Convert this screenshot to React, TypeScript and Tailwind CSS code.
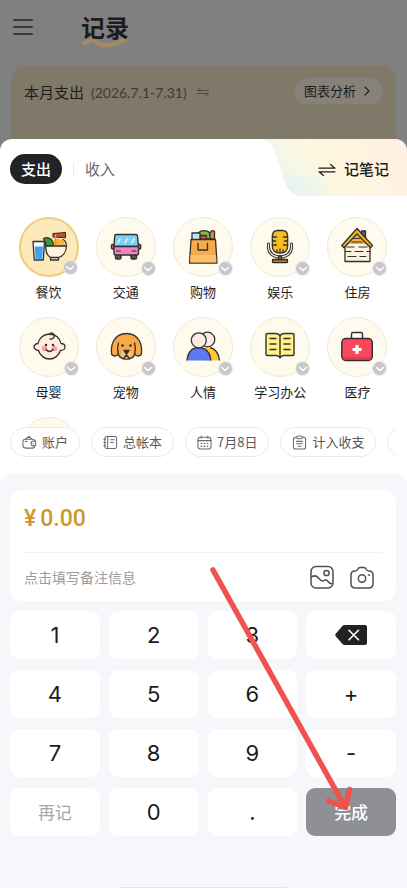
import type { ReactNode } from "react";

const INK = "#33302e";

function FoodIcon() {
  return (
    <g stroke={INK} strokeWidth="1.300" strokeLinejoin="round" strokeLinecap="round">
      <path d="M14 24.500h11.500l-1.200 18.500h-9z" fill="#f4fbff" />
      <path d="M15.800 29.500h8.200l-.8 12.500h-6.700z" fill="#3fa4e8" stroke="none" />
      <path d="M34 16.500l12.500-1v5.200L34 20z" fill="#b9532a" strokeWidth="1.100" />
      <path d="M33 29c0-4 2.500-7 6-7s7 2.500 7 7z" fill="#f8b53c" stroke="none" />
      <path d="M36.500 18v9" stroke="#f08a24" strokeWidth="1.500" />
      <path d="M24.500 21.500c4-2 8 0 9 3l1 4.500h-7.500c0-3-1-4.500-2.500-7.500z" fill="#3c9a3c" />
      <path d="M44 22.500c2.500 1.500 3.500 4 3.300 6.500" fill="none" />
      <path d="M26.700 29h20.600c.2 5.500-3 10-7.800 11.500V43h-8v-2.500c-3.500-2-4.800-6-4.800-11.500z" fill="#fff3dd" />
      <path d="M31.500 40.500h8" />
    </g>
  );
}

function BusIcon() {
  return (
    <g stroke={INK} strokeWidth="1.400" strokeLinejoin="round" strokeLinecap="round">
      <rect x="19.500" y="37" width="5.500" height="5" rx="1.200" fill="#5b5658" />
      <rect x="35" y="37" width="5.500" height="5" rx="1.200" fill="#5b5658" />
      <rect x="15.500" y="27.500" width="3" height="4.500" rx="1" fill="#e9559c" />
      <rect x="41.700" y="27.500" width="3" height="4.500" rx="1" fill="#e9559c" />
      <path d="M20 17.500h20q1.500 0 1.500 1.500l1 10.500H17.800l1-10.500q0-1.500 1.200-1.500z" fill="#7ed0f3" />
      <path d="M18 29.500h24.500v7q0 1.500-1.500 1.500H19.500q-1.500 0-1.500-1.500z" fill="#f285bd" />
      <path d="M22 26l2-4M29 26l2-4M36 26l2-4" stroke="#e8f9ff" />
      <path d="M20.500 34h4M36 34h4" strokeWidth="1.200" />
    </g>
  );
}

function BagIcon() {
  return (
    <g stroke={INK} strokeWidth="1.300" strokeLinejoin="round" strokeLinecap="round">
      <path d="M25 22v-6q5-4 11-1l2 7z" fill="#7cc142" />
      <rect x="19" y="16" width="8" height="7" fill="#bfe6f5" />
      <rect x="27.500" y="18.500" width="6" height="4" fill="#e5483b" />
      <path d="M37 22v-6q2-4 4.500-1.500V22z" fill="#d98a45" />
      <path d="M18 22.500h24.500l1.500 23.500H16.500z" fill="#f8ab4c" />
      <path d="M17.500 38h25.500l.4 7.400H17.200z" fill="#ffc06c" stroke="none" />
      <path d="M25 26.500v6.500h9.500v-6.500" fill="none" />
    </g>
  );
}

function MicIcon() {
  return (
    <g stroke={INK} strokeWidth="1.300" strokeLinejoin="round" strokeLinecap="round">
      <path d="M18.500 27v3c0 6 5 10 11.500 10s11.500-4 11.500-10v-3" fill="none" strokeWidth="3.200" />
      <path d="M18.500 27v3c0 6 5 10 11.500 10s11.500-4 11.500-10v-3" fill="none" stroke="#eee7dc" strokeWidth="1.200" />
      <path d="M28.500 39h3v4h-3z" fill="#b8722a" />
      <rect x="22.500" y="42.500" width="15" height="3.200" rx=".8" fill="#b8722a" />
      <path d="M22.300 20q0-6.500 5.200-6.500h5q5.200 0 5.200 6.500v9q0 7-7.700 7t-7.700-7z" fill="#f8bd24" />
      <path d="M22.500 20h4M22.500 24h3M22.500 28h4M37.500 20h-4M37.500 24h-3M37.500 28h-4M27 33v2M30 32v3.500M33 33v2" />
    </g>
  );
}

function HouseIcon() {
  return (
    <g stroke={INK} strokeWidth="1.300" strokeLinejoin="round" strokeLinecap="round">
      <path d="M34.500 14h4v9h-4z" fill="#5d6674" />
      <path d="M18 27l12-12 13 12v17.500H18z" fill="#fdf3df" />
      <path d="M22 27l8-9 9 9z" fill="#f7b62a" stroke="none" />
      <path d="M30 11.500L14.800 28.500l2.200 2.200L30 17l13.500 13.700 2-2.200z" fill="#f5b01f" />
      <path d="M25 25h10M20 30h7M32 30h8M18 34.500h6M28 34.500h8M40 34.500h3M21 39.500h8M33 39.500h6M27 21.500h6" strokeWidth="1.200" />
    </g>
  );
}

function BabyIcon() {
  return (
    <g stroke={INK} strokeWidth="1.300" strokeLinejoin="round" strokeLinecap="round">
      <path d="M30.500 17c-6 0-10.500 4-11.500 9.500-2.500 0-4 2-4 3.500s2 3.500 4.500 3.500c1.500 5 6 8.500 11 8.500s9.500-3.500 11-8.500c2.500 0 4.500-1.500 4.500-3.500s-1.500-3.500-4-3.500C41 21 36.500 17 30.500 17z" fill="#fdeee0" />
      <path d="M31 22c4 .5 5.500-3.500 3-5.500-1.500-1.200-3.500-.3-3 1.200" fill="none" />
      <circle cx="25.500" cy="31.500" r="2.800" fill="#ff9d9b" stroke="none" />
      <circle cx="35.500" cy="31.500" r="2.800" fill="#ff9d9b" stroke="none" />
      <circle cx="27" cy="28" r=".6" fill={INK} />
      <circle cx="34" cy="28" r=".6" fill={INK} />
      <path d="M27 32.500q3.500 4 7 0" fill="none" />
    </g>
  );
}

function DogIcon() {
  return (
    <g stroke={INK} strokeWidth="1.300" strokeLinejoin="round" strokeLinecap="round">
      <path d="M30.500 16.500c-6.500 0-10.500 3-13 7.500-2 4-2.500 9-1.800 13.500 2.500 2.500 5.500 1.500 6.500-.5 1 3.500 3.500 5 8.300 5s7.300-1.500 8.300-5c1 2 4 3 6.500.5.700-4.500.2-9.500-1.800-13.500-2.500-4.500-6.500-7.500-13-7.500z" fill="#f9a945" />
      <path d="M22.200 37c-1-4-.7-8 .3-11M38.800 37c1-4 .7-8-.3-11" fill="none" />
      <path d="M25 37c1-2.500 3-4 5.500-4s4.500 1.500 5.500 4c-1 3-2.500 4.500-5.500 4.500S26 40 25 37z" fill="#fbc57c" stroke="none" />
      <circle cx="26.500" cy="28.500" r=".7" fill={INK} />
      <circle cx="34.500" cy="28.500" r=".7" fill={INK} />
      <path d="M28 33.500h5l-1.500 2.500h-2z" fill={INK} />
      <path d="M30.500 36v2l-3 3.500M30.500 38l3 3.500" fill="none" />
    </g>
  );
}

function PeopleIcon() {
  return (
    <g stroke={INK} strokeWidth="1.300" strokeLinejoin="round">
      <path d="M30 43.500V31c9-2.500 15.500 3 16.500 12.500z" fill="#fbcb2e" stroke="none" />
      <path d="M37 30.500c5.500 1.500 9 6.500 9.500 13" fill="none" />
      <circle cx="34.500" cy="22.500" r="7.300" fill="#fdeae2" />
      <path d="M14 43.500c.5-8 5-13 11.800-13s11.500 5 12 13z" fill="#5d78f5" stroke="none" />
      <path d="M14 43.500c.5-8 5-13 11.800-13s11.500 5 12 13" fill="none" />
      <circle cx="25.800" cy="23.300" r="7.500" fill="#fdeae2" />
    </g>
  );
}

function BookIcon() {
  return (
    <g stroke={INK} strokeWidth="1.400" strokeLinejoin="round" strokeLinecap="round">
      <path d="M30 18.500q-2-2-4.500-2h-8q-1.500 0-1.500 1.500v19q0 1.500 1.500 1.500H26q2.500 0 4 2.500 1.500-2.500 4-2.500h8.500q1.500 0 1.500-1.500V18q0-1.500-1.500-1.500h-8q-2.500 0-4.500 2z" fill="#fff08a" />
      <path d="M30 18.500V40M20 21.500h6M20 27h6M20 32.500h6M34 21.500h6M34 27h6M34 32.500h6" fill="none" />
    </g>
  );
}

function KitIcon() {
  return (
    <g stroke={INK} strokeWidth="1.400" strokeLinejoin="round">
      <path d="M24.500 22v-5q0-1.500 1.500-1.500h8q1.500 0 1.500 1.500v5" fill="#fff" />
      <rect x="14.800" y="21.500" width="30.500" height="22" rx="4" fill="#f9475c" />
      <path d="M15.500 38.500v1.500q0 3 3 3h23q3 0 3-3v-1.500q0 2-3 2h-23q-3 0-3-2z" fill="#d93850" stroke="none" />
      <path d="M30 28v9M25.500 32.500h9" stroke="#fff" strokeWidth="3.200" />
    </g>
  );
}

const categories: { name: string; icon: ReactNode }[] = [
  { name: "餐饮", icon: <FoodIcon /> },
  { name: "交通", icon: <BusIcon /> },
  { name: "购物", icon: <BagIcon /> },
  { name: "娱乐", icon: <MicIcon /> },
  { name: "住房", icon: <HouseIcon /> },
  { name: "母婴", icon: <BabyIcon /> },
  { name: "宠物", icon: <DogIcon /> },
  { name: "人情", icon: <PeopleIcon /> },
  { name: "学习办公", icon: <BookIcon /> },
  { name: "医疗", icon: <KitIcon /> },
];

function CategoryButton({ name, icon, active }: { name: string; icon: ReactNode; active: boolean }) {
  return (
    <button type="button" className="flex flex-col items-center gap-[5px]">
      <span
        className={
          active
            ? "relative flex size-[60px] items-center justify-center rounded-full border-2 border-[#ecce7e] bg-[#fde8b9]"
            : "relative flex size-[60px] items-center justify-center rounded-full border border-[#f0ead0] bg-[#fefbee]"
        }
      >
        <svg viewBox="0 0 60 60" className="size-[60px] shrink-0" fill="none">
          {icon}
        </svg>
        <span className="absolute -right-px bottom-0 flex size-[15px] items-center justify-center rounded-full border border-white/60 bg-[#c9c7ca]">
          <svg viewBox="0 0 10 10" className="size-[10px]" fill="none" stroke="#fff" strokeWidth="1.500" strokeLinecap="round" strokeLinejoin="round">
            <path d="M1.500 3.500L5 6.500l3.500-3" />
          </svg>
        </span>
      </span>
      <span className="text-[13px] leading-5 whitespace-nowrap text-[#1c1c1e]">{name}</span>
    </button>
  );
}

const chips: { label: string; icon: ReactNode }[] = [
  {
    label: "账户",
    icon: (
      <>
        <path d="M3.500 4.500h8q2 0 2 2M13.500 11.500q0 2.500-2.500 2.500H4q-3 0-3-3V7q0-2.500 2.500-2.500L7.500 1.500l3 3M3.500 7h2" />
        <path d="M14.500 6.500h-2.300a2.500 2.500 0 0 0 0 5h2.300zM12 9h.3" />
      </>
    ),
  },
  {
    label: "总帐本",
    icon: (
      <>
        <rect x="2" y="1.500" width="12.500" height="13" rx="2" />
        <path d="M5 1.500v13M.8 4.500h2M.8 8h2M.8 11.500h2M8 5h4M8 8h3" />
      </>
    ),
  },
  {
    label: "7月8日",
    icon: (
      <>
        <rect x="1" y="2.500" width="14" height="12.500" rx="3" />
        <path d="M1 6h14M4.500 1v2.500M11.500 1v2.500" />
        <path d="M4.500 9h.5M7.700 9h.5M11 9h.5M4.500 12h.5M7.700 12h.5M11 12h.5" strokeWidth="1.400" />
      </>
    ),
  },
  {
    label: "计入收支",
    icon: (
      <>
        <path d="M5 2.500H4q-2.500 0-2.500 2.500v7.500Q1.500 15 4 15h8q2.500 0 2.500-2.500V5q0-2.500-2.500-2.500h-1" />
        <rect x="5" y="1" width="6" height="3" rx="1.500" />
        <path d="M4.800 6.800h6.400M4.800 9.300h6.400M6.500 12h3" />
      </>
    ),
  },
];

const keys = ["1", "2", "3", "⌫", "4", "5", "6", "+", "7", "8", "9", "-", "再记", "0", ".", "完成"];

function Key({ value }: { value: string }) {
  if (value === "完成") {
    return (
      <button type="button" className="h-12 rounded-[9px] bg-[#8f9095] text-[17px] font-medium text-white">
        {value}
      </button>
    );
  }
  if (value === "再记") {
    return (
      <button type="button" className="h-12 rounded-[9px] bg-white text-[17px] text-[#a5a5a8]">
        {value}
      </button>
    );
  }
  if (value === "⌫") {
    return (
      <button type="button" aria-label="删除" className="flex h-12 items-center justify-center rounded-[9px] bg-white">
        <svg viewBox="0 0 32 20" className="h-5 w-8" fill="none">
          <path d="M9.500 0H30q2 0 2 2v16q0 2-2 2H9.500q-1.200 0-2-1L.7 11.200q-.9-1.200 0-2.400L7.500 1q.8-1 2-1z" fill="#222224" />
          <path d="M14 5.300l9.500 9.500M23.500 5.300L14 14.800" stroke="#fff" strokeWidth="1.600" strokeLinecap="round" />
        </svg>
      </button>
    );
  }
  return (
    <button type="button" className="h-12 rounded-[9px] bg-white font-[Inter,sans-serif] text-[22px] text-[#1c1c1e]">
      {value}
    </button>
  );
}

function SwapIcon({ className }: { className: string }) {
  return (
    <svg viewBox="0 0 18 14" className={className} fill="none" stroke="currentColor" strokeWidth="1.200" strokeLinecap="round" strokeLinejoin="round">
      <path d="M1 5.200h16L12.500 1.500M17 8.800H1L5.500 12.500" />
    </svg>
  );
}

export default function App() {
  return (
    <div className="relative flex min-h-screen flex-col overflow-hidden bg-[#808081] font-['Noto_Sans_CJK_SC',sans-serif] text-[#1c1c1e]">
      <header className="flex h-[66px] items-start gap-12 px-[13px] pt-[11px]">
        <button type="button" aria-label="菜单" className="flex h-8 items-center">
          <svg viewBox="0 0 20 16" className="h-4 w-5" stroke="#202022" strokeWidth="1.500" strokeLinecap="round">
            <path d="M.8 1h18.400M.8 8h18.400M.8 15h18.400" />
          </svg>
        </button>
        <h1 className="relative text-2xl leading-8 font-bold">
          <svg viewBox="0 0 48 12" className="absolute -bottom-[5px] left-0 h-3 w-full" fill="none" stroke="#a38b65" strokeWidth="4.500" strokeLinecap="round" strokeLinejoin="round">
            <path d="M3.500 7l8.500-4" />
            <path d="M12 3.500c3 1 3 3 6 4.500 8 3 20 0 27-6" />
          </svg>
          <span className="relative">记录</span>
        </h1>
      </header>

      <section className="mx-[11px] flex h-[73px] items-start justify-between rounded-t-[14px] bg-[#80796a] px-[13px] pt-3">
        <p className="flex h-7 items-center text-[15px]">
          本月支出
          <span className="ml-[7px] font-[Lato,sans-serif] text-[14px] text-[#3d3b37]">(2026.7.1-7.31)</span>
          <svg viewBox="0 0 12 10" className="ml-2.5 h-[10px] w-3" fill="none" stroke="#4e4b45" strokeLinecap="round" strokeLinejoin="round">
            <path d="M11.500 3.500H.5L3.500 1M.5 6.500h11l-3 2.500" />
          </svg>
        </p>
        <button type="button" className="flex h-[26px] items-center gap-2 rounded-full bg-[#86827a] pr-[13px] pl-[10px] text-[13px]">
          图表分析
          <svg viewBox="0 0 6 10" className="h-[10px] w-1.5" fill="none" stroke="#2a2a2a" strokeWidth="1.200" strokeLinecap="round" strokeLinejoin="round">
            <path d="M1 1l4 4-4 4" />
          </svg>
        </button>
      </section>

      <main className="flex flex-1 flex-col overflow-hidden rounded-t-[12px] bg-white">
        <div className="flex h-[60px] items-start pl-[10px]">
          <nav className="flex h-[60px] items-center">
            <button type="button" className="h-[30px] rounded-full bg-[#232228] px-[11px] text-[15px] leading-[30px] font-medium text-white">
              支出
            </button>
            <span className="mx-[11px] h-[14px] w-px bg-[#ebebed]" />
            <button type="button" className="text-[15px] text-[#6b6b6e]">
              收入
            </button>
          </nav>
          <button type="button" className="relative ml-auto flex h-[57px] w-[147px] items-center justify-end gap-2 pt-1 pr-[18px] text-[15px] font-medium">
            <svg viewBox="0 0 147 57" preserveAspectRatio="none" className="absolute inset-0 size-full">
              <defs>
                <linearGradient id="noteBase" x1="0" y1="0.300" x2="1" y2="0">
                  <stop offset="0.050" stopColor="#eff7ee" />
                  <stop offset="0.350" stopColor="#fef7e0" />
                  <stop offset="0.700" stopColor="#fff3df" />
                  <stop offset="1" stopColor="#ffeee6" />
                </linearGradient>
                <radialGradient id="noteBlue" cx="0.200" cy="0.850" r="0.300">
                  <stop offset="0" stopColor="#e2f4f1" />
                  <stop offset="1" stopColor="#e2f4f1" stopOpacity="0" />
                </radialGradient>
              </defs>
              <path d="M0 0c9 1 13 7 16 16l8 24c4 12 9 17 20 17h103V0z" fill="url(#noteBase)" />
              <path d="M0 0c9 1 13 7 16 16l8 24c4 12 9 17 20 17h103V0z" fill="url(#noteBlue)" />
            </svg>
            <SwapIcon className="relative h-[14px] w-[18px]" />
            <span className="relative">记笔记</span>
          </button>
        </div>

        <div className="h-[228px] overflow-hidden pt-[18px] pr-[11px] pl-[10px]">
          <div className="grid grid-cols-5 gap-y-[15px]">
            {categories.map((c, i) => (
              <CategoryButton key={c.name} name={c.name} icon={c.icon} active={i === 0} />
            ))}
            <span className="size-[60px] justify-self-center rounded-full border border-[#f0ead0] bg-[#fefbee]" />
          </div>
        </div>

        <div className="mr-[11px] flex gap-[11px] overflow-hidden pb-[17px] pl-[10px]">
          {chips.map((chip) => (
            <button
              key={chip.label}
              type="button"
              className="flex h-[30px] shrink-0 items-center gap-[5px] rounded-full border border-[#e9e9eb] px-[11px] text-[13px] whitespace-nowrap text-[#59595c]"
            >
              <svg viewBox="0 0 16 16" className="size-[15px]" fill="none" stroke="#6a6a6d" strokeWidth="1.100" strokeLinecap="round" strokeLinejoin="round">
                {chip.icon}
              </svg>
              {chip.label}
            </button>
          ))}
          <span className="h-[30px] w-[70px] shrink-0 rounded-full border border-[#e9e9eb]" />
        </div>

        <div className="flex flex-1 flex-col rounded-t-[10px] bg-[#f6f7fa] pt-4 pr-[11px] pl-[10px]">
          <div className="rounded-[12px] bg-white px-[14px]">
            <p className="flex h-[63px] items-start gap-1 border-b border-[#f0f0f2] pt-[13px] font-[Roboto,sans-serif] text-[23px] leading-8 font-medium text-[#d0962a]">
              <span>¥</span>
              <span>0.00</span>
            </p>
            <div className="flex h-12 items-center gap-4">
              <input
                type="text"
                aria-label="备注信息"
                placeholder="点击填写备注信息"
                className="min-w-0 flex-1 text-[14px] outline-none placeholder:text-[#9b9b9e]"
              />
              <button type="button" aria-label="添加图片">
                <svg viewBox="0 0 24 24" className="size-6" fill="none" stroke="#4f4f52" strokeWidth="1.500" strokeLinecap="round" strokeLinejoin="round">
                  <rect x="1" y="1.500" width="22" height="21.500" rx="5" />
                  <circle cx="16.500" cy="8" r="2.600" />
                  <path d="M1.500 12c3-2 5-1.500 7 1s3.500 4 5.500 2.500 3-.5 4 1 2.500 2.500 4.500 2" />
                </svg>
              </button>
              <button type="button" aria-label="拍照" className="mr-2">
                <svg viewBox="0 0 24 24" className="size-6" fill="none" stroke="#4f4f52" strokeWidth="1.500" strokeLinecap="round" strokeLinejoin="round">
                  <path d="M5 6q2 0 3-2l.5-.8Q9.200 2.500 10 2.500h4q.8 0 1.500.7L16 4q1 2 3 2 4 0 4 4v8.500q0 4.500-4.500 4.500h-13Q1 23 1 18.500V10q0-4 4-4z" />
                  <circle cx="12" cy="13.500" r="3.700" />
                  <path d="M18.500 10h1" />
                </svg>
              </button>
            </div>
          </div>

          <div className="mt-[10px] grid grid-cols-4 gap-x-[9px] gap-y-[11px]">
            {keys.map((k) => (
              <Key key={k} value={k} />
            ))}
          </div>

          <span className="mx-auto mt-auto h-px w-[168px] bg-[#e2e3e6]" />
        </div>
      </main>

      {/* pointer towards the confirm key */}
      <svg
        viewBox="0 0 150 250"
        className="pointer-events-none absolute right-[47px] bottom-[73px] h-[250px] w-[150px]"
        fill="none"
        stroke="#ef534f"
        strokeWidth="5.500"
        strokeLinecap="round"
        strokeLinejoin="round"
      >
        <path d="M3 5l132 237M118.500 236l17 6.500 4-18" />
      </svg>
    </div>
  );
}
